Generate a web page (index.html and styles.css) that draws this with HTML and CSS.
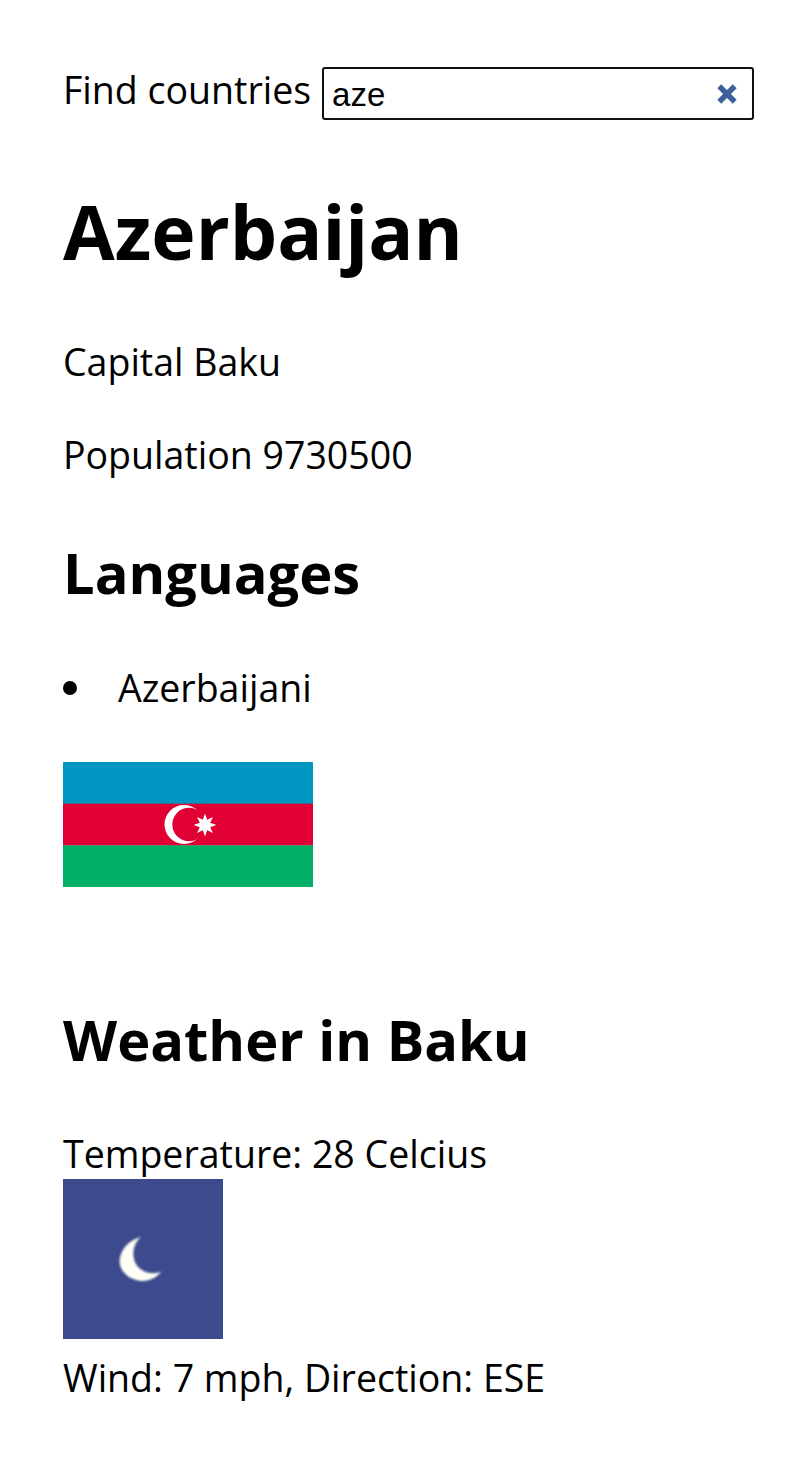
FILE: index.html
```html
<!DOCTYPE html>
<html lang="en">
<head>
  <meta charset="UTF-8" />
  <title>Find countries</title>
  <link rel="stylesheet" href="styles.css">
</head>
<body>
  <div class="search">
    <label for="find">Find countries</label>
    <div class="search-box">
      <input id="find" type="text" value="aze" />
      <svg class="clear" viewBox="0 0 20 20" width="22" height="22" aria-hidden="true">
        <path d="M3 3 L17 17 M17 3 L3 17" />
      </svg>
    </div>
  </div>

  <h1>Azerbaijan</h1>
  <p>Capital Baku</p>
  <p>Population 9730500</p>

  <h2>Languages</h2>
  <ul>
    <li>Azerbaijani</li>
  </ul>

  <svg class="flag" viewBox="0 0 250 125" width="250" height="125" role="img" aria-label="Flag of Azerbaijan">
    <rect width="250" height="42" fill="#0098c3" />
    <rect y="41.67" width="250" height="42" fill="#e00034" />
    <rect y="83.33" width="250" height="41.67" fill="#00ae65" />
    <circle cx="121" cy="62.5" r="19.5" fill="#fff" />
    <circle cx="126" cy="62.5" r="16.700" fill="#e00034" />
    <polygon fill="#fff" points="142,51.500 144.200,57.700 150,54.900 147.200,60.700 153.400,63 147.200,65.200 150,71 144.200,68.300 142,74.500 139.800,68.300 134,71 136.800,65.200 130.600,63 136.800,60.700 134,54.900 139.800,57.700" />
  </svg>

  <h2 class="weather-title">Weather in Baku</h2>
  <div class="weather">
    Temperature: 28 Celcius<br>
    <svg class="moon" viewBox="0 0 160 160" width="160" height="160" role="img" aria-label="Clear night">
      <defs>
        <filter id="soft"><feGaussianBlur stdDeviation="0.8" /></filter>
      </defs>
      <rect width="160" height="160" fill="#3e4a8e" />
      <path d="M78 58 C62 62 55 76 57 86 C60 100 84 110 98 93 C84 97 73 90 71 80 C69 71 72 63 78 58 Z" fill="#fffff6" filter="url(#soft)" />
    </svg><br>
    Wind: 7 mph, Direction: ESE
  </div>
</body>
</html>
```

FILE: styles.css
```css
body {
  margin: 0;
  padding: 65px 31px 40px 63px;
  background: #fff;
  color: #000;
  font-family: "Open Sans", sans-serif;
  font-size: 37.5px;
  line-height: 50px;
}

.search { display: flex; align-items: flex-start; gap: 11px; }
.search-box { position: relative; flex: 1; margin-top: 2px; }
.search-box input {
  display: block;
  box-sizing: border-box;
  width: 100%;
  height: 53px;
  padding: 3px 8px 0;
  border: 2px solid #111;
  border-radius: 3px;
  font-family: "Liberation Sans", sans-serif;
  font-size: 33px;
  color: #000;
  outline: none;
}
.clear { position: absolute; right: 16px; top: 16px; fill: none; stroke: #3d5f9b; stroke-width: 5; }

h1 { margin: 61px 0 0; font-size: 75px; line-height: 100px; font-weight: 700; }
h2 { margin: 0; font-size: 56px; line-height: 75px; font-weight: 700; }
p { margin: 43px 0 0; }
h1 + p { margin-top: 56px; }
p + h2 { margin-top: 55px; }

ul { margin: 53px 0 0; padding: 0; list-style: none; }
li { display: flex; align-items: center; gap: 41px; }
li::before { content: ""; width: 14px; height: 14px; border-radius: 50%; background: #000; }

.flag { display: block; margin-top: 49px; }
.weather-title { margin-top: 115px; }
.weather { margin-top: 52px; }
.moon { vertical-align: baseline; margin-bottom: 3px; }
```
